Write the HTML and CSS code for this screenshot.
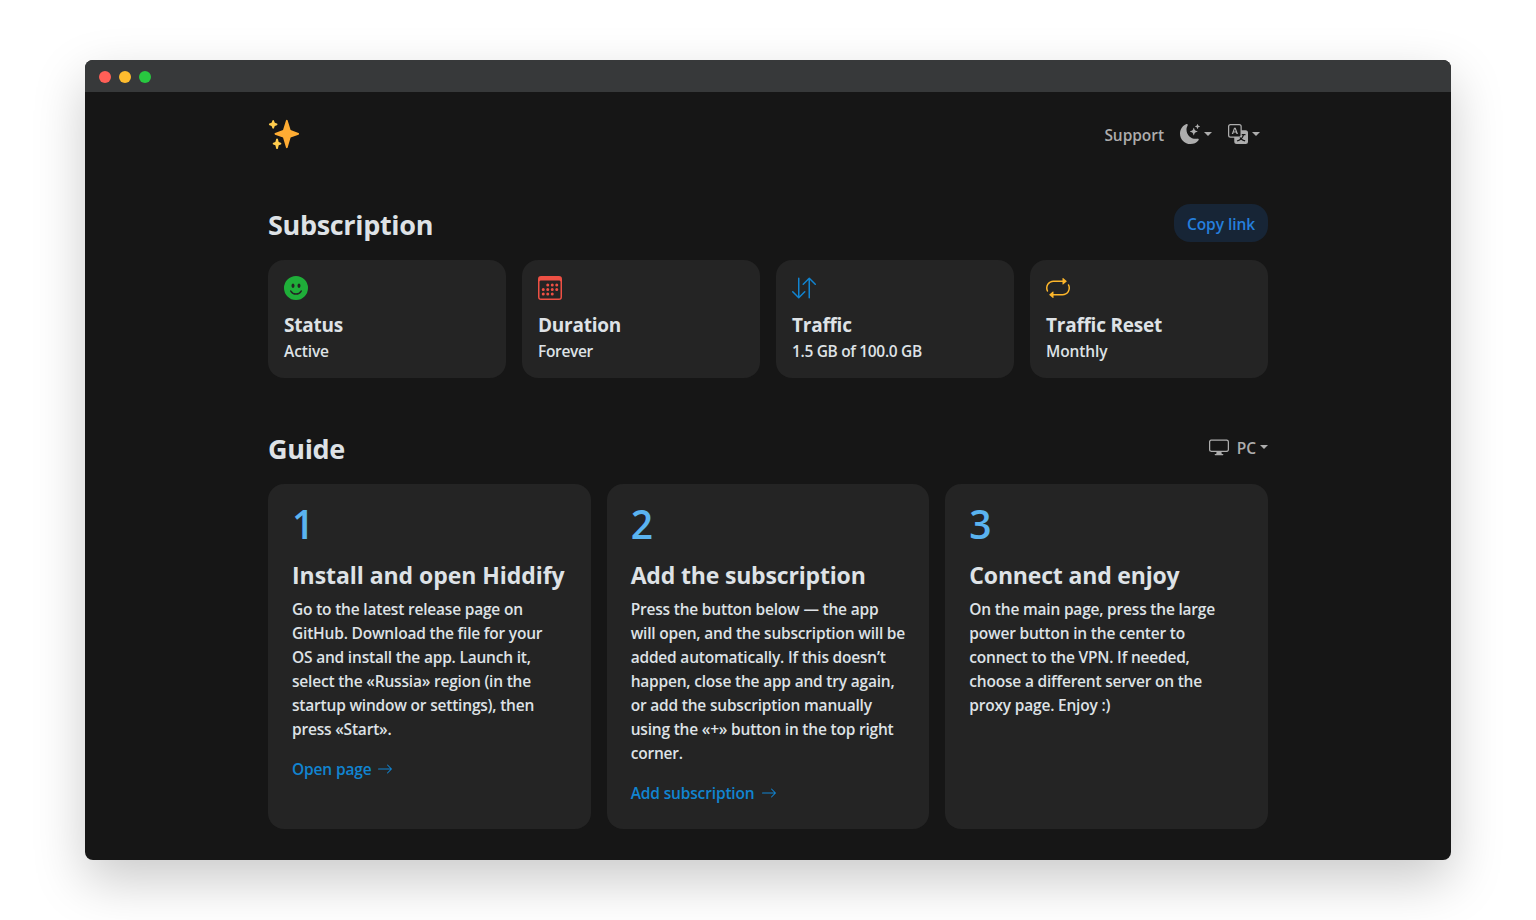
FILE: index.html
```
<!DOCTYPE html>
<html lang="en">
<head>
<meta charset="utf-8">
<title>Subscription</title>
<link rel="stylesheet" href="styles.css">
</head>
<body>
<div class="window">
  <div class="titlebar"><i class="dot red"></i><i class="dot yellow"></i><i class="dot green"></i></div>
  <div class="page">
    <header class="nav">
      <svg class="logo" viewBox="0 0 36 36"><path fill="#ffac33" d="M34.347 16.893l-8.899-3.294-3.323-10.891c-.128-.42-.517-.708-.956-.708-.439 0-.828.288-.956.708l-3.322 10.891-8.9 3.294c-.393.146-.653.519-.653.938 0 .418.26.793.653.938l8.895 3.293 3.324 11.223c.126.424.516.715.959.715.442 0 .833-.291.959-.716l3.324-11.223 8.896-3.293c.391-.144.652-.518.652-.937 0-.418-.261-.792-.653-.938z"/><path fill="#ffcc4d" d="M14.347 27.894l-2.314-.856-.9-3.3c-.118-.436-.513-.738-.964-.738-.451 0-.846.302-.965.737l-.9 3.3-2.313.856c-.393.146-.653.52-.653.938 0 .418.26.793.653.938l2.301.853.907 3.622c.112.444.511.756.97.756.459 0 .858-.312.97-.757l.907-3.622 2.301-.853c.393-.144.653-.519.653-.937 0-.418-.26-.793-.653-.937zM10.009 6.231l-2.364-.875-.876-2.365c-.145-.393-.519-.653-.938-.653-.418 0-.792.26-.938.653l-.875 2.365-2.365.875c-.393.146-.653.52-.653.938 0 .418.26.793.653.938l2.365.875.875 2.365c.146.393.52.653.938.653.418 0 .792-.26.938-.653l.875-2.365 2.365-.875c.393-.146.653-.52.653-.938 0-.418-.26-.792-.653-.938z"/></svg>
      <nav class="menu">
        <a class="support">Support</a>
        <span class="drop"><svg class="ico20" viewBox="0 0 16 16"><path d="M6 .278a.77.77 0 0 1 .08.858 7.2 7.2 0 0 0-.878 3.46c0 4.021 3.278 7.277 7.318 7.277q.792-.001 1.533-.16a.79.79 0 0 1 .81.316.73.73 0 0 1-.031.893A8.35 8.35 0 0 1 8.344 16C3.734 16 0 12.286 0 7.71 0 4.266 2.114 1.312 5.124.06A.75.75 0 0 1 6 .278"/><path d="M10.794 3.148a.217.217 0 0 1 .412 0l.387 1.162c.173.518.579.924 1.097 1.097l1.162.387a.217.217 0 0 1 0 .412l-1.162.387a1.73 1.73 0 0 0-1.097 1.097l-.387 1.162a.217.217 0 0 1-.412 0l-.387-1.162A1.73 1.73 0 0 0 9.31 6.593l-1.162-.387a.217.217 0 0 1 0-.412l1.162-.387a1.73 1.73 0 0 0 1.097-1.097zM13.863.099a.145.145 0 0 1 .274 0l.258.774c.115.346.386.617.732.732l.774.258a.145.145 0 0 1 0 .274l-.774.258a1.16 1.16 0 0 0-.732.732l-.258.774a.145.145 0 0 1-.274 0l-.258-.774a1.16 1.16 0 0 0-.732-.732l-.774-.258a.145.145 0 0 1 0-.274l.774-.258c.346-.115.617-.386.732-.732z"/></svg><i class="caret"></i></span>
        <span class="drop"><svg class="ico20" viewBox="0 0 16 16"><path d="M4.545 6.714 4.11 8H3l1.862-5h1.284L8 8H6.833l-.435-1.286zm1.634-.736L5.5 3.956h-.049l-.679 2.022z"/><path d="M0 2a2 2 0 0 1 2-2h7a2 2 0 0 1 2 2v3h3a2 2 0 0 1 2 2v7a2 2 0 0 1-2 2H7a2 2 0 0 1-2-2v-3H2a2 2 0 0 1-2-2zm2-1a1 1 0 0 0-1 1v7a1 1 0 0 0 1 1h7a1 1 0 0 0 1-1V2a1 1 0 0 0-1-1zm7.138 9.995q.289.451.63.846c-.748.575-1.673 1.001-2.768 1.292.178.217.451.635.555.867 1.125-.359 2.08-.844 2.886-1.494.777.665 1.739 1.165 2.93 1.472.133-.254.414-.673.629-.89-1.125-.253-2.057-.694-2.82-1.284.681-.747 1.222-1.651 1.621-2.757H14V8h-3v1.047h.765c-.318.844-.74 1.546-1.272 2.13a6 6 0 0 1-.415-.492 2 2 0 0 1-.94.31"/></svg><i class="caret"></i></span>
      </nav>
    </header>

    <section class="subscription">
      <div class="head"><h2>Subscription</h2><button class="copy">Copy link</button></div>
      <div class="stats">
        <article class="stat"><svg class="ico24 c-green" viewBox="0 0 16 16"><path d="M8 16A8 8 0 1 0 8 0a8 8 0 0 0 0 16M7 6.5C7 7.328 6.552 8 6 8s-1-.672-1-1.5S5.448 5 6 5s1 .672 1 1.5M4.285 9.567a.5.5 0 0 1 .683.183A3.5 3.5 0 0 0 8 11.5a3.5 3.5 0 0 0 3.032-1.75.5.5 0 1 1 .866.5A4.5 4.5 0 0 1 8 12.5a4.5 4.5 0 0 1-3.898-2.25.5.5 0 0 1 .183-.683M10 8c-.552 0-1-.672-1-1.5S9.448 5 10 5s1 .672 1 1.5S10.552 8 10 8"/></svg><h5>Status</h5><p>Active</p></article>
        <article class="stat"><svg class="ico24 c-red" viewBox="0 0 16 16"><path d="M14 0H2a2 2 0 0 0-2 2v12a2 2 0 0 0 2 2h12a2 2 0 0 0 2-2V2a2 2 0 0 0-2-2M1 3.857C1 3.384 1.448 3 2 3h12c.552 0 1 .384 1 .857v10.286c0 .473-.448.857-1 .857H2c-.552 0-1-.384-1-.857z"/><path d="M6.5 7a1 1 0 1 0 0-2 1 1 0 0 0 0 2m3 0a1 1 0 1 0 0-2 1 1 0 0 0 0 2m3 0a1 1 0 1 0 0-2 1 1 0 0 0 0 2m-9 3a1 1 0 1 0 0-2 1 1 0 0 0 0 2m3 0a1 1 0 1 0 0-2 1 1 0 0 0 0 2m3 0a1 1 0 1 0 0-2 1 1 0 0 0 0 2m3 0a1 1 0 1 0 0-2 1 1 0 0 0 0 2m-9 3a1 1 0 1 0 0-2 1 1 0 0 0 0 2m3 0a1 1 0 1 0 0-2 1 1 0 0 0 0 2m3 0a1 1 0 1 0 0-2 1 1 0 0 0 0 2"/></svg><h5>Duration</h5><p class="tight">Forever</p></article>
        <article class="stat"><svg class="ico24 c-blue" viewBox="0 0 16 16"><path d="M11.5 15a.5.5 0 0 0 .5-.5V2.707l3.146 3.147a.5.5 0 0 0 .708-.708l-4-4a.5.5 0 0 0-.708 0l-4 4a.5.5 0 1 0 .708.708L11 2.707V14.5a.5.5 0 0 0 .5.5m-7-14a.5.5 0 0 1 .5.5v11.793l3.146-3.147a.5.5 0 0 1 .708.708l-4 4a.5.5 0 0 1-.708 0l-4-4a.5.5 0 0 1 .708-.708L4 13.293V1.5a.5.5 0 0 1 .5-.5"/></svg><h5>Traffic</h5><p class="tight">1.5 GB of 100.0 GB</p></article>
        <article class="stat"><svg class="ico24 c-yellow" viewBox="0 0 16 16"><path d="M11 5.466V4H5a4 4 0 0 0-3.584 5.777.5.5 0 1 1-.896.446A5 5 0 0 1 5 3h6V1.534a.25.25 0 0 1 .41-.192l2.36 1.966c.12.1.12.284 0 .384l-2.36 1.966a.25.25 0 0 1-.41-.192m3.81.086a.5.5 0 0 1 .67.225A5 5 0 0 1 11 13H5v1.466a.25.25 0 0 1-.41.192l-2.36-1.966a.25.25 0 0 1 0-.384l2.36-1.966a.25.25 0 0 1 .41.192V12h6a4 4 0 0 0 3.585-5.777.5.5 0 0 1 .225-.67Z"/></svg><h5>Traffic Reset</h5><p>Monthly</p></article>
      </div>
    </section>

    <section class="guide">
      <div class="head"><h2>Guide</h2><span class="drop platform"><svg class="ico20" viewBox="0 0 16 16"><path d="M0 4s0-2 2-2h12s2 0 2 2v6s0 2-2 2h-4q0 1 .25 1.5H11a.5.5 0 0 1 0 1H5a.5.5 0 0 1 0-1h.75Q6 13 6 12H2s-2 0-2-2zm1.398-.855a.76.76 0 0 0-.254.302A1.5 1.5 0 0 0 1 4.01V10c0 .325.078.502.145.602q.105.156.302.254a1.5 1.5 0 0 0 .538.143L2.01 11H14c.325 0 .502-.078.602-.145a.76.76 0 0 0 .254-.302 1.5 1.5 0 0 0 .143-.538L15 9.99V4c0-.325-.078-.502-.145-.602a.76.76 0 0 0-.302-.254A1.5 1.5 0 0 0 13.99 3H2c-.325 0-.502.078-.602.145"/></svg><span class="pc">PC</span><i class="caret"></i></span></div>
      <div class="steps">
        <article class="step"><div class="num">1</div><h4 class="wide">Install and open Hiddify</h4>
          <p>Go to the latest release page on<br>GitHub. Download the file for your<br>OS and install the app. Launch it,<br>select the «Russia» region (in the<br>startup window or settings), then<br>press «Start».</p>
          <a class="link"><span>Open page</span><svg viewBox="0 0 16 16"><path d="M1 8a.5.5 0 0 1 .5-.5h11.793l-3.147-3.146a.5.5 0 0 1 .708-.708l4 4a.5.5 0 0 1 0 .708l-4 4a.5.5 0 0 1-.708-.708L13.293 8.5H1.5A.5.5 0 0 1 1 8"/></svg></a></article>
        <article class="step"><div class="num">2</div><h4>Add the subscription</h4>
          <p>Press the button below — the app<br>will open, and the subscription will be<br>added automatically. If this doesn’t<br>happen, close the app and try again,<br>or add the subscription manually<br>using the «+» button in the top right<br>corner.</p>
          <a class="link"><span>Add subscription</span><svg viewBox="0 0 16 16"><path d="M1 8a.5.5 0 0 1 .5-.5h11.793l-3.147-3.146a.5.5 0 0 1 .708-.708l4 4a.5.5 0 0 1 0 .708l-4 4a.5.5 0 0 1-.708-.708L13.293 8.5H1.5A.5.5 0 0 1 1 8"/></svg></a></article>
        <article class="step"><div class="num">3</div><h4>Connect and enjoy</h4>
          <p>On the main page, press the large<br>power button in the center to<br>connect to the VPN. If needed,<br>choose a different server on the<br>proxy page. Enjoy :)</p></article>
      </div>
    </section>
  </div>
</div>
</body>
</html>
```
FILE: styles.css
```
* { box-sizing: border-box; }
body {
  margin: 0;
  height: 920px;
  padding: 60px 85px;
  background: #fff;
  overflow: hidden;
  font-family: "Open Sans", "Noto Sans", sans-serif;
  font-size: 15.5px;
  font-weight: 600;
  line-height: 24px;
  color: #dee2e6;
}
h2, h4, h5, p { margin: 0; white-space: nowrap; }
svg { display: block; fill: currentColor; flex: none; }
.window {
  height: 800px;
  border-radius: 8px;
  background: #161616;
  overflow: hidden;
  box-shadow: 0 20px 52px rgba(0, 0, 0, .21);
}
.titlebar { display: flex; gap: 8px; align-items: center; height: 32px; padding: 2px 14px 0; background: #37393a; }
.dot { width: 12px; height: 12px; border-radius: 50%; }
.red { background: #ff5f57; }
.yellow { background: #febc2e; }
.green { background: #28c840; }
.page { width: 1000px; margin: 0 auto; }
.nav { display: flex; justify-content: space-between; height: 112px; padding-top: 26px; }
.logo { width: 32px; height: 32px; }
.menu { display: flex; gap: 16px; padding: 6px 8px 0 0; color: #adadad; height: 40px; }
.support { line-height: 22px; letter-spacing: -.05px; }
.drop { display: flex; gap: 4px; height: 20px; color: #adadad; }
.ico20 { width: 20px; height: 20px; }
.caret { width: 8px; height: 4px; margin-top: 8px; border: 4px solid transparent; border-top-color: currentColor; border-bottom: 0; }
.head { display: flex; justify-content: space-between; height: 56px; }
.head h2 { font-size: 27px; font-weight: 700; line-height: 42px; letter-spacing: -.33px; }
.copy { width: 94px; height: 38px; padding: 2px 0 0; border: 0; border-radius: 16px; background: #172536; color: #257fdd; font: inherit; letter-spacing: -.05px; text-align: center; }
.stats { display: grid; grid-template-columns: repeat(4, 1fr); gap: 16px; }
.stat { height: 118px; padding: 16px; border-radius: 16px; background: #242424; }
.ico24 { width: 24px; height: 24px; margin-bottom: 13px; }
.c-green { color: #1fae39; }
.c-red { color: #ee5044; }
.c-blue { color: #1184d1; }
.c-yellow { color: #fdb62b; }
h5 { font-size: 19px; font-weight: 700; line-height: 24px; letter-spacing: -.24px; }
.stat p { line-height: 24px; padding-top: 2px; letter-spacing: -.12px; }
.stat .tight { letter-spacing: -.33px; }
.guide { padding-top: 50px; }
.platform { padding-top: 9px; }
.pc { margin-left: 4px; line-height: 22px; }
.steps { display: grid; grid-template-columns: repeat(3, minmax(0, 1fr)); gap: 16px; }
.step { height: 345px; padding: 16px 24px; border-radius: 16px; background: #242424; }
.num { font-size: 39px; line-height: 48px; letter-spacing: -1px; color: #5ab3f0; }
h4 { padding-top: 13px; font-size: 23px; font-weight: 700; line-height: 28px; letter-spacing: -.17px; }
.wide { letter-spacing: -.05px; }
.step p { padding-top: 8px; letter-spacing: -.2px; }
.link { display: flex; gap: 6px; align-items: center; margin-top: 16px; color: #1184d1; letter-spacing: -.15px; }
.link svg { width: 16px; height: 16px; }
```
